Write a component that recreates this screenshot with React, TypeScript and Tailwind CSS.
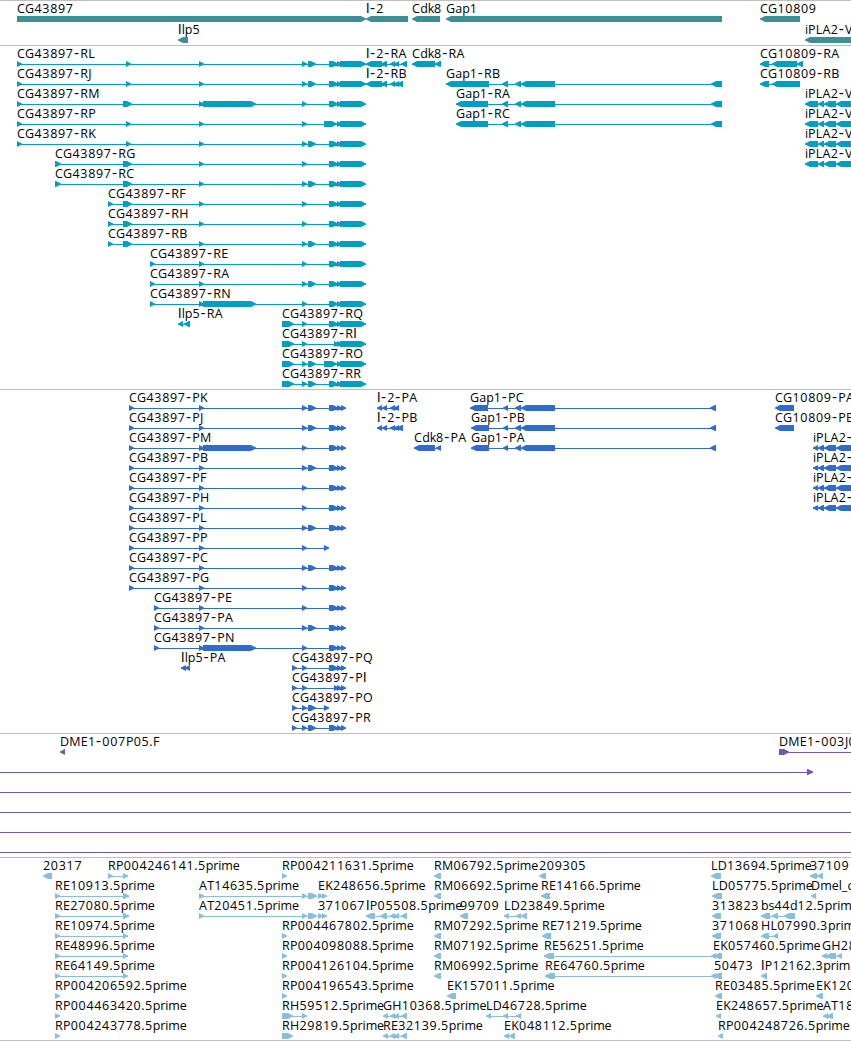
import React from "react";

type Direction = "right" | "left";

interface Feature {
  row: number;
  x: number;
  label: string;
  blocks: string;
  dir: Direction;
}

interface TrackProps {
  name: string;
  height: number;
  rowHeight: number;
  color: string;
  features: Feature[];
}

const fwd = (row: number, x: number, label: string, blocks: string): Feature => ({ row, x, label, blocks, dir: "right" });
const rev = (row: number, x: number, label: string, blocks: string): Feature => ({ row, x, label, blocks, dir: "left" });

const genes: Feature[] = [
  fwd(0, 17, "CG43897", "17-366"),
  rev(0, 366, "I-2", "366-408"),
  rev(0, 412, "Cdk8", "412-440"),
  rev(0, 446, "Gap1", "446-722"),
  rev(0, 760, "CG10809", "760-800"),
  rev(1, 178, "Ilp5", "178-188"),
  rev(1, 805, "iPLA2-V", "805-870"),
];

const END = "329-338 337-342 340-366";
const SHORT = `302-307 ${END}`;
const LONG = `302-307 308-316 ${END}`;
const GAP_TAIL = "502-508 515-521 521-555 711-722";
const IPLA = "805-818 818-824 824-836 836-870";

const transcripts: Feature[] = [
  fwd(0, 17, "CG43897-RL", `17-22 126-131 199-204 ${LONG}`),
  fwd(1, 17, "CG43897-RJ", `17-22 126-131 199-204 ${LONG}`),
  fwd(2, 17, "CG43897-RM", `17-22 123-132 199-204 203-256 ${SHORT}`),
  fwd(3, 17, "CG43897-RP", "17-22 126-131 199-204 302-307 324-337 337-342 340-366"),
  fwd(4, 17, "CG43897-RK", `17-22 126-131 199-204 ${LONG}`),
  fwd(5, 55, "CG43897-RG", `55-61 123-132 199-204 ${SHORT}`),
  fwd(6, 55, "CG43897-RC", `55-61 123-132 199-204 ${LONG}`),
  fwd(7, 108, "CG43897-RF", `108-113 123-132 199-204 ${SHORT}`),
  fwd(8, 108, "CG43897-RH", `108-113 123-132 199-204 ${SHORT}`),
  fwd(9, 108, "CG43897-RB", `108-113 123-132 199-204 ${LONG}`),
  fwd(10, 150, "CG43897-RE", `150-155 199-204 ${SHORT}`),
  fwd(11, 150, "CG43897-RA", `150-155 199-204 ${LONG}`),
  fwd(12, 150, "CG43897-RN", `150-155 199-204 203-256 ${SHORT}`),
  rev(13, 178, "Ilp5-RA", "178-183 184-190"),
  fwd(13, 282, "CG43897-RQ", `282-294 ${SHORT}`),
  fwd(14, 282, "CG43897-RI", "282-294 302-307 334-339 337-342 340-366"),
  fwd(15, 282, "CG43897-RO", "282-294 302-307 308-316 324-337 337-342 340-366"),
  fwd(16, 282, "CG43897-RR", `282-294 ${LONG}`),
  rev(0, 366, "I-2-RA", "366-382 381-387 390-395 394-399 401-407"),
  rev(1, 366, "I-2-RB", "366-382 381-387 390-395 394-399 397-403"),
  rev(0, 412, "Cdk8-RA", "412-435 435-441"),
  rev(1, 446, "Gap1-RB", `446-489 ${GAP_TAIL}`),
  rev(2, 456, "Gap1-RA", `456-488 ${GAP_TAIL}`),
  rev(3, 456, "Gap1-RC", `456-488 ${GAP_TAIL}`),
  rev(0, 760, "CG10809-RA", "760-769 772-797 797-803"),
  rev(1, 760, "CG10809-RB", "760-769 772-800"),
  rev(2, 805, "iPLA2-V", IPLA),
  rev(3, 805, "iPLA2-V", IPLA),
  rev(4, 805, "iPLA2-V", IPLA),
  rev(5, 805, "iPLA2-V", IPLA),
];

const PEND = "329-338 337-342 341-346";
const PSHORT = `302-307 ${PEND}`;
const PLONG = `302-307 308-316 ${PEND}`;
const PGAP_TAIL = "503-508 515-521 521-555 710-716";
const PIPLA = "813-818 818-824 824-836 836-870";

const proteins: Feature[] = [
  fwd(0, 129, "CG43897-PK", `129-134 199-204 ${PLONG}`),
  fwd(1, 129, "CG43897-PJ", `129-134 199-204 ${PLONG}`),
  fwd(2, 129, "CG43897-PM", `129-134 199-204 203-256 ${PSHORT}`),
  fwd(3, 129, "CG43897-PB", `129-134 199-204 ${PLONG}`),
  fwd(4, 129, "CG43897-PF", `129-134 199-204 ${PSHORT}`),
  fwd(5, 129, "CG43897-PH", `129-134 199-204 ${PSHORT}`),
  fwd(6, 129, "CG43897-PL", `129-134 199-204 ${PLONG}`),
  fwd(7, 129, "CG43897-PP", "129-134 199-204 302-307 324-329"),
  fwd(8, 129, "CG43897-PC", `129-134 199-204 ${PLONG}`),
  fwd(9, 129, "CG43897-PG", `129-134 199-204 ${PSHORT}`),
  fwd(10, 154, "CG43897-PE", `154-159 199-204 ${PSHORT}`),
  fwd(11, 154, "CG43897-PA", `154-159 199-204 ${PLONG}`),
  fwd(12, 154, "CG43897-PN", `154-159 199-204 203-256 ${PSHORT}`),
  rev(13, 181, "Ilp5-PA", "181-186 185-190"),
  fwd(13, 292, "CG43897-PQ", `292-297 ${PSHORT}`),
  fwd(14, 292, "CG43897-PI", "292-297 302-307 334-339 337-342 341-346"),
  fwd(15, 292, "CG43897-PO", "292-297 302-307 308-316 324-329"),
  fwd(16, 292, "CG43897-PR", `292-297 ${PLONG}`),
  rev(0, 377, "I-2-PA", "377-382 382-387 390-395 394-399"),
  rev(1, 377, "I-2-PB", "377-382 382-387 390-395 394-399 397-403"),
  rev(2, 414, "Cdk8-PA", "414-435 436-441"),
  rev(0, 470, "Gap1-PC", `470-488 ${PGAP_TAIL}`),
  rev(1, 471, "Gap1-PB", `471-489 ${PGAP_TAIL}`),
  rev(2, 471, "Gap1-PA", `471-489 ${PGAP_TAIL}`),
  rev(0, 775, "CG10809-PA", "775-794"),
  rev(1, 775, "CG10809-PB", "775-794"),
  rev(2, 813, "iPLA2-", PIPLA),
  rev(3, 813, "iPLA2-", PIPLA),
  rev(4, 813, "iPLA2-", PIPLA),
  rev(5, 813, "iPLA2-", PIPLA),
];

const clones: Feature[] = [
  rev(0, 60, "DME1-007P05.F", "60-65"),
  fwd(0, 779, "DME1-003J0", "779-789 880-890"),
  fwd(1, 0, "", "-20--10 807-813"),
  fwd(2, 0, "", "-20--10 880-890"),
  fwd(3, 0, "", "-20--10 880-890"),
  fwd(4, 0, "", "-20--10 880-890"),
  fwd(5, 0, "", "-20--10 880-890"),
];

const ests: Feature[] = [
  rev(0, 43, "20317", "43-52"),
  fwd(0, 108, "RP004246141.5prime", "108-113 123-128"),
  fwd(0, 282, "RP004211631.5prime", "282-287"),
  rev(0, 434, "RM06792.5prime", "434-441"),
  rev(0, 539, "209305", "539-546"),
  rev(0, 711, "LD13694.5prime", "711-721"),
  rev(0, 810, "37109", "810-817 817-823"),
  fwd(1, 55, "RE10913.5prime", "55-60 123-129"),
  fwd(1, 199, "AT14635.5prime", "199-204 302-307 308-317"),
  fwd(1, 318, "EK248656.5prime", "318-323 322-327"),
  rev(1, 434, "RM06692.5prime", "434-441"),
  rev(1, 541, "RE14166.5prime", "541-550"),
  rev(1, 712, "LD05775.5prime", "712-722"),
  rev(1, 811, "Dmel_c", "811-816"),
  fwd(2, 55, "RE27080.5prime", "55-60 123-129"),
  fwd(2, 199, "AT20451.5prime", "199-204 302-307 308-317"),
  fwd(2, 318, "371067", "318-323 322-327"),
  rev(2, 366, "IP05508.5prime", "366-375 380-387 390-395 394-399 401-407"),
  rev(2, 460, "99709", "460-468"),
  rev(2, 504, "LD23849.5prime", "504-509 516-521 521-527"),
  rev(2, 712, "313823", "712-721"),
  rev(2, 761, "bs44d12.5prim", "761-770 772-778 784-795"),
  fwd(3, 55, "RE10974.5prime", "55-60 123-128"),
  fwd(3, 282, "RP004467802.5prime", "282-287"),
  rev(3, 434, "RM07292.5prime", "434-441"),
  rev(3, 542, "RE71219.5prime", "542-551"),
  rev(3, 712, "371068", "712-721"),
  rev(3, 761, "HL07990.3prim", "761-769 773-778"),
  fwd(4, 55, "RE48996.5prime", "55-60 123-128"),
  fwd(4, 282, "RP004098088.5prime", "282-287"),
  rev(4, 434, "RM07192.5prime", "434-441"),
  rev(4, 544, "RE56251.5prime", "544-554 711-716"),
  rev(4, 713, "EK057460.5prime", "714-722"),
  rev(4, 822, "GH28", "822-827 826-836 837-842"),
  fwd(5, 55, "RE64149.5prime", "55-60 123-128"),
  fwd(5, 282, "RP004126104.5prime", "282-287"),
  rev(5, 434, "RM06992.5prime", "434-441"),
  rev(5, 545, "RE64760.5prime", "545-555 711-716"),
  rev(5, 714, "50473", "714-722"),
  rev(5, 761, "IP12162.3prim", "761-767"),
  fwd(6, 55, "RP004206592.5prime", "55-60"),
  fwd(6, 282, "RP004196543.5prime", "282-287"),
  rev(6, 447, "EK157011.5prime", "447-456"),
  rev(6, 715, "RE03485.5prime", "715-722"),
  rev(6, 816, "EK120", "816-823"),
  fwd(7, 55, "RP004463420.5prime", "55-60"),
  fwd(7, 282, "RH59512.5prime", "282-293 302-307"),
  rev(7, 383, "GH10368.5prime", "383-388 390-395 394-399 401-407"),
  rev(7, 486, "LD46728.5prime", "486-491 503-508 516-521"),
  rev(7, 716, "EK248657.5prime", "716-721"),
  rev(7, 823, "AT18", "823-828 827-833"),
  fwd(8, 55, "RP004243778.5prime", "55-60"),
  fwd(8, 282, "RH29819.5prime", "282-293"),
  rev(8, 383, "RE32139.5prime", "383-388 390-395 394-399 401-407"),
  rev(8, 504, "EK048112.5prime", "504-509 509-515"),
  rev(8, 718, "RP004248726.5prime", "718-723"),
];

function parseBlocks(blocks: string): [number, number][] {
  return blocks.split(" ").map((b) => {
    const m = /^(-?\d+)-(-?\d+)$/.exec(b)!;
    return [Number(m[1]), Number(m[2])];
  });
}

function arrowPath([s, e]: [number, number], y: number, dir: Direction) {
  const tip = Math.min(5, e - s);
  return dir === "right"
    ? `M${s} ${y}H${e - tip}L${e} ${y + 2.5}V${y + 3.5}L${e - tip} ${y + 6}H${s}Z`
    : `M${e} ${y}H${s + tip}L${s} ${y + 2.5}V${y + 3.5}L${s + tip} ${y + 6}H${e}Z`;
}

function runStyle(run: string) {
  if (run === "-") return "font-['DejaVu_Sans',sans-serif] text-[14px] tracking-[1.2px]";
  if (run === "I") return "font-['Lato',sans-serif] tracking-[0.3px]";
  if (/\d/.test(run)) return "tracking-[0.7px]";
  if (/[a-z]/.test(run)) return "tracking-[-0.12px]";
  return "tracking-[0.25px]";
}

/* Figures and hyphens are set wider than the letters; the capital I has no serifs. */
function Label({ x, y, text }: { x: number; y: number; text: string }) {
  const runs = text.match(/\d+|[a-z]+|-|I|[^\da-zI-]+/g) ?? [];
  return (
    <text x={x} y={y} className="fill-black">
      {runs.map((run, i) => (
        <tspan key={i} dx={run === "-" ? 0.2 : undefined} className={runStyle(run)}>
          {run}
        </tspan>
      ))}
    </text>
  );
}

function Track({ name, height, rowHeight, color, features }: TrackProps) {
  return (
    <section aria-label={name} className="border-t border-[#bebebe]">
      <svg width="851" height={height} className={`block overflow-hidden ${color}`}>
        {features.map((f, i) => {
          const top = f.row * rowHeight;
          const blocks = parseBlocks(f.blocks);
          const start = blocks[0][0];
          const end = blocks[blocks.length - 1][1];
          return (
            <g key={i}>
              {blocks.length > 1 && <rect x={start} y={top + 18} width={end - start} height="1" fill="currentColor" />}
              <path d={blocks.map((b) => arrowPath(b, top + 15, f.dir)).join("")} fill="currentColor" />
            </g>
          );
        })}
        {features.map((f, i) => (f.label ? <Label key={i} x={f.x} y={f.row * rowHeight + 12} text={f.label} /> : null))}
      </svg>
    </section>
  );
}

export default function App() {
  return (
    <main className="flex h-[1041px] w-[851px] flex-col overflow-hidden border-b border-[#bebebe] bg-white font-['Open_Sans',sans-serif] text-[12.5px]">
      <Track name="Genes" height={44} rowHeight={21} color="text-[#408e94]" features={genes} />
      <Track name="Transcripts" height={343} rowHeight={20} color="text-[#009fc0]" features={transcripts} />
      <Track name="Proteins" height={343} rowHeight={20} color="text-[#306ccd]" features={proteins} />
      <Track name="Clones" height={123} rowHeight={20} color="text-[#7459a9]" features={clones} />
      <Track name="ESTs" height={182} rowHeight={20} color="text-[#89bedd]" features={ests} />
    </main>
  );
}
